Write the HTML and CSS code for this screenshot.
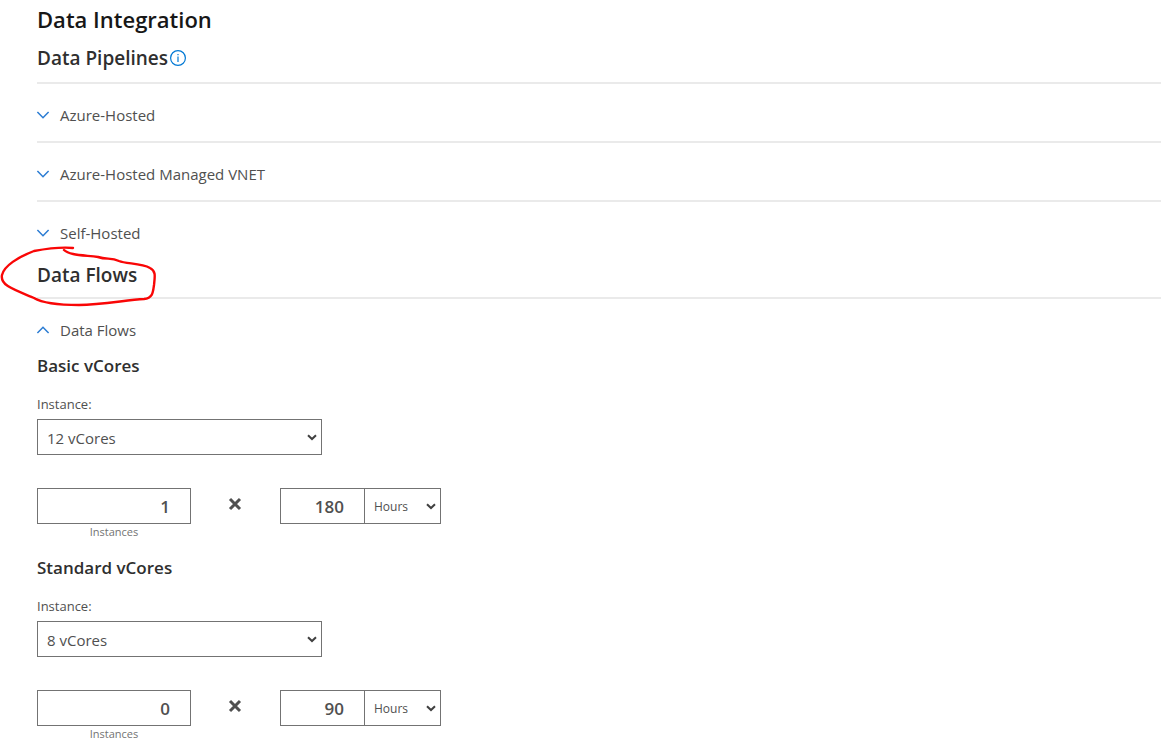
FILE: index.html
```html
<!DOCTYPE html>
<html lang="en">
<head>
<meta charset="utf-8">
<title>Data Integration</title>
<link rel="stylesheet" href="styles.css">
</head>
<body>
<main class="estimate">
  <h1 class="title">Data Integration</h1>

  <section>
    <h2 class="heading">Data Pipelines
      <button class="info" type="button" aria-label="About data pipelines">
        <svg width="16" height="16" viewBox="0 0 16 16"><circle cx="8" cy="8" r="7.4"/><path d="M8 6.5V12M8 4V5.3"/></svg>
      </button>
    </h2>
    <div class="item">
      <button class="toggle" type="button" aria-expanded="false"><svg class="chevron" width="12" height="8" viewBox="0 0 12 8"><path d="M.4 .9L6 6.7L11.6 .9"/></svg>Azure-Hosted</button>
    </div>
    <div class="item">
      <button class="toggle" type="button" aria-expanded="false"><svg class="chevron" width="12" height="8" viewBox="0 0 12 8"><path d="M.4 .9L6 6.7L11.6 .9"/></svg>Azure-Hosted Managed VNET</button>
    </div>
    <div class="item">
      <button class="toggle" type="button" aria-expanded="false"><svg class="chevron" width="12" height="8" viewBox="0 0 12 8"><path d="M.4 .9L6 6.7L11.6 .9"/></svg>Self-Hosted</button>
    </div>
  </section>

  <section class="flows">
    <svg class="scribble" width="160" height="62" viewBox="0 246 160 62" aria-hidden="true"><path d="M73 248C62 247 45 249 34 251C18 257 4 266 2 275C0 285 12 289 34 298C44 304 61 305 79 305C102 305 126 300 144 299C153 298 153 292 154 285C155 276 156 271 150 268C141 263 126 264 119 261C111 257 107 260 98 257C82 255 69 255 64 250"/></svg>
    <h2 class="heading">Data Flows</h2>
    <div class="item">
      <button class="toggle" type="button" aria-expanded="true"><svg class="chevron" width="12" height="8" viewBox="0 0 12 8"><path d="M.4 7.1L6 1.3L11.6 7.1"/></svg>Data Flows</button>
    </div>

    <div class="cores">
      <h3 class="subheading">Basic vCores</h3>
      <label class="label" for="basic-size">Instance:</label>
      <div class="picker wide"><select id="basic-size" class="select"><option>12 vCores</option></select><svg class="arrow" width="10" height="7" viewBox="0 0 10 7"><path d="M1 1.2L5 5L9 1.2"/></svg></div>
      <div class="formula">
        <div class="quantity">
          <input class="number" id="basic-count" type="text" value="1">
          <label class="caption" for="basic-count">Instances</label>
        </div>
        <svg class="times" width="14" height="14" viewBox="0 0 14 14" role="img" aria-label="times"><path d="M2 2L12 12M12 2L2 12"/></svg>
        <div class="duration">
          <input class="number" type="text" value="180" aria-label="Duration">
          <div class="picker unit"><select class="select" aria-label="Unit"><option>Hours</option></select><svg class="arrow" width="10" height="7" viewBox="0 0 10 7"><path d="M1 1.2L5 5L9 1.2"/></svg></div>
        </div>
      </div>
    </div>

    <div class="cores">
      <h3 class="subheading">Standard vCores</h3>
      <label class="label" for="standard-size">Instance:</label>
      <div class="picker wide"><select id="standard-size" class="select"><option>8 vCores</option></select><svg class="arrow" width="10" height="7" viewBox="0 0 10 7"><path d="M1 1.2L5 5L9 1.2"/></svg></div>
      <div class="formula">
        <div class="quantity">
          <input class="number" id="standard-count" type="text" value="0">
          <label class="caption" for="standard-count">Instances</label>
        </div>
        <svg class="times" width="14" height="14" viewBox="0 0 14 14" role="img" aria-label="times"><path d="M2 2L12 12M12 2L2 12"/></svg>
        <div class="duration">
          <input class="number" type="text" value="90" aria-label="Duration">
          <div class="picker unit"><select class="select" aria-label="Unit"><option>Hours</option></select><svg class="arrow" width="10" height="7" viewBox="0 0 10 7"><path d="M1 1.2L5 5L9 1.2"/></svg></div>
        </div>
      </div>
    </div>
  </section>
</main>
</body>
</html>
```
FILE: styles.css
```css
* { box-sizing: border-box; }
body {
  margin: 0;
  background: #fff;
  color: #505050;
  font-family: "Segoe UI", "Open Sans", "Noto Sans", sans-serif;
}
button, input, select { font-family: inherit; color: inherit; }
svg { fill: none; flex: none; }
.estimate { padding-left: 37px; }
.title {
  margin: 0;
  font-size: 22px;
  font-weight: 600;
  line-height: 38px;
  color: #171717;
}
.heading {
  display: flex;
  align-items: center;
  gap: 2px;
  margin: 0;
  padding: 6px 0 10px;
  font-size: 19px;
  font-weight: 600;
  line-height: 28px;
  color: #2f2f2f;
}
.info {
  display: flex;
  padding: 0;
  border: 0;
  background: none;
}
.info svg { stroke: #0078d4; stroke-width: 1.2; }
.item {
  padding: 19px 0 14px;
  border-top: 2px solid #eaeaea;
}
.toggle {
  display: flex;
  align-items: center;
  gap: 11px;
  padding: 0;
  border: 0;
  background: none;
  font-size: 15px;
  line-height: 24px;
}
.chevron { stroke: #2b7cd3; stroke-width: 1.5; overflow: visible; }
.flows { position: relative; }
.flows .heading { padding: 2px 0 8px; }
.scribble {
  position: absolute;
  top: -13px;
  left: -37px;
  stroke: #f90606;
  stroke-width: 2.4;
  stroke-linecap: round;
  stroke-linejoin: round;
}
.cores { margin-bottom: 18px; }
.subheading {
  margin: 0 0 18px;
  font-size: 17px;
  font-weight: 600;
  line-height: 20px;
  color: #2f2f2f;
}
.label {
  display: block;
  margin-bottom: 5px;
  font-size: 13px;
  line-height: 20px;
}
.picker { display: grid; align-items: center; }
.picker > * { grid-area: 1 / 1; }
.wide { max-width: 285px; }
.unit { width: 77px; margin-left: -1px; }
.select {
  appearance: none;
  width: 100%;
  height: 36px;
  padding: 2px 24px 0 9px;
  border: 1px solid #737373;
  border-radius: 0;
  background: #fff;
  font-size: 15px;
}
.unit .select { padding-top: 0; font-size: 12px; }
.arrow {
  justify-self: end;
  margin-right: 5px;
  stroke: #404040;
  stroke-width: 2;
  pointer-events: none;
}
.formula {
  display: flex;
  align-items: flex-start;
  margin-top: 33px;
}
.quantity { width: 154px; }
.number {
  display: block;
  width: 100%;
  height: 36px;
  padding: 0 20px 0 8px;
  border: 1px solid #737373;
  border-radius: 0;
  font-size: 17px;
  font-weight: 600;
  text-align: right;
}
.caption {
  display: block;
  font-size: 11px;
  line-height: 16px;
  text-align: center;
  color: #737373;
}
.times { margin: 9px 38px 0 37px; stroke: #505050; stroke-width: 3; }
.duration { display: flex; }
.duration .number { width: 85px; }
```
